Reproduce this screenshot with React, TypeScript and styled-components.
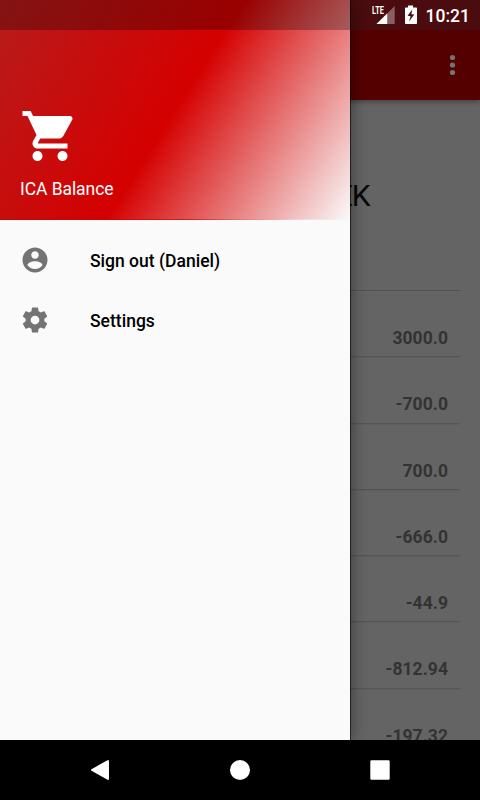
import React from "react";
import styled, { createGlobalStyle } from "styled-components";

const Global = createGlobalStyle`
  *, *::before, *::after { box-sizing: border-box; }
  body { margin: 0; font-family: Roboto, "Noto Sans", sans-serif; background: #000; }
`;

const Screen = styled.div`
  position: relative;
  width: 480px;
  height: 800px;
  display: flex;
  flex-direction: column;
  overflow: hidden;
  background: #000;
`;

const Content = styled.main`
  position: relative;
  height: 740px;
  display: flex;
  flex-direction: column;
  overflow: hidden;
  background: #646464;
`;

const AppBar = styled.header`
  flex: none;
  height: 100px;
  padding: 30px 17px 0 0;
  display: flex;
  align-items: center;
  justify-content: flex-end;
  background: linear-gradient(#4a0c0e 30px, #550000 30px);
  box-shadow: 0 2px 5px rgba(0, 0, 0, 0.35);
`;

const Balance = styled.div`
  flex: none;
  height: 190px;
  padding: 1px 110.3px 0 0;
  text-align: right;
  line-height: 190px;
  font-size: 30px;
  letter-spacing: -0.9px;
  color: #080808;
`;

const List = styled.ul`
  flex: none;
  margin: 0 20px;
  padding: 0;
  list-style: none;
`;

const Row = styled.li`
  height: 66.25px;
  padding: 36px 12px 0 0;
  border-top: 1px solid #515151;
  text-align: right;
  font-size: 17.5px;
  line-height: 22px;
  font-weight: 700;
  letter-spacing: 0.05px;
  color: #333;

  & + & {
    border-top-color: #555;
    box-shadow: inset 0 1px 0 #5f5f5f;
  }
`;

const Drawer = styled.aside`
  position: absolute;
  left: 0;
  top: 0;
  width: 350px;
  height: 740px;
  background: #fafafa;
  box-shadow: 1px 0 0 rgba(0, 0, 0, 0.55), 2px 0 14px rgba(0, 0, 0, 0.4);
`;

const DrawerHeader = styled.div`
  height: 220px;
  padding: 106px 20px 0 19.5px;
  display: flex;
  flex-direction: column;
  background:
    linear-gradient(90deg, #b80b0b, #d50000 33%, #d9201f 55%, #f4d4d4 85%, #fafafa) 0 219px / 100% 1px no-repeat,
    linear-gradient(122.15deg, #b71c1c, #d50000 50%, #fafafa);
`;

const AppName = styled.div`
  margin: 11px 0 0 0.5px;
  font-size: 17.5px;
  line-height: 24px;
  letter-spacing: -0.07px;
  color: #fff;
`;

const Menu = styled.nav`
  padding-top: 10px;
`;

const MenuItem = styled.div`
  height: 60px;
  padding-left: 20px;
  display: flex;
  align-items: center;
  gap: 40px;
  font-size: 17.5px;
  font-weight: 500;
  color: #000;
`;

const MenuLabel = styled.span`
  padding-top: 2px;
  letter-spacing: 0.01px;
`;

const StatusBar = styled.div`
  position: absolute;
  left: 0;
  top: 0;
  width: 480px;
  height: 30px;
  padding-right: 10px;
  display: flex;
  align-items: center;
  justify-content: flex-end;
  color: #fff;
`;

const StatusShade = styled.div`
  position: absolute;
  left: 0;
  top: 0;
  width: 350px;
  height: 30px;
  background: rgba(0, 0, 0, 0.28);
`;

const Network = styled.div`
  position: relative;
  width: 26px;
  height: 30px;
  margin-right: 6px;
`;

const NetworkLabel = styled.span`
  position: absolute;
  left: 0.5px;
  top: 5px;
  font-size: 10.5px;
  line-height: 11px;
  font-weight: 700;
  transform: scaleX(0.7);
  transform-origin: left;
`;

const Clock = styled.time`
  margin-left: 8px;
  font-size: 17.5px;
  line-height: 30px;
  font-weight: 500;
  padding-top: 2px;
`;

const NavBar = styled.footer`
  height: 60px;
  padding: 0 30px;
  display: flex;
  background: #000;
`;

const NavKey = styled.div`
  flex: 1;
  display: flex;
  align-items: center;
  justify-content: center;
`;

const amounts = ["3000.0", "-700.0", "700.0", "-666.0", "-44.9", "-812.94", "-197.32"];

const menu = [
  {
    label: "Sign out (Daniel)",
    path: "M12 2C6.48 2 2 6.48 2 12s4.48 10 10 10 10-4.48 10-10S17.52 2 12 2zm0 3c1.66 0 3 1.34 3 3s-1.34 3-3 3-3-1.34-3-3 1.34-3 3-3zm0 14.2c-2.5 0-4.71-1.28-6-3.22.03-1.99 4-3.08 6-3.08 1.99 0 5.97 1.09 6 3.08-1.29 1.94-3.5 3.22-6 3.22z",
  },
  {
    label: "Settings",
    path: "M19.43 12.98c.04-.32.07-.64.07-.98s-.03-.66-.07-.98l2.11-1.65c.19-.15.24-.42.12-.64l-2-3.46c-.12-.22-.39-.3-.61-.22l-2.49 1c-.52-.4-1.08-.73-1.69-.98l-.38-2.65C14.46 2.18 14.25 2 14 2h-4c-.25 0-.46.18-.49.42l-.38 2.65c-.61.25-1.17.59-1.69.98l-2.49-1c-.23-.09-.49 0-.61.22l-2 3.46c-.13.22-.07.49.12.64l2.11 1.65c-.04.32-.07.65-.07.98s.03.66.07.98l-2.11 1.65c-.19.15-.24.42-.12.64l2 3.46c.12.22.39.3.61.22l2.49-1c.52.4 1.08.73 1.69.98l.38 2.65c.03.24.24.42.49.42h4c.25 0 .46-.18.49-.42l.38-2.65c.61-.25 1.17-.59 1.69-.98l2.49 1c.23.09.49 0 .61-.22l2-3.46c.12-.22.07-.49-.12-.64l-2.11-1.65zM12 15.5c-1.93 0-3.5-1.57-3.5-3.5s1.57-3.5 3.5-3.5 3.5 1.57 3.5 3.5-1.57 3.5-3.5 3.5z",
  },
];

export default function App() {
  return (
    <>
      <Global />
      <Screen>
        <Content>
          <AppBar>
            <svg width="20" height="30" viewBox="0 0 20 30" fill="#747474">
              <circle cx="9.5" cy="7.5" r="2.6" />
              <circle cx="9.5" cy="15" r="2.6" />
              <circle cx="9.5" cy="22.5" r="2.6" />
            </svg>
          </AppBar>
          <Balance>-197.32 SEK</Balance>
          <List>
            {amounts.map((amount) => (
              <Row key={amount}>{amount}</Row>
            ))}
          </List>
          <Drawer>
            <DrawerHeader>
              <svg width="60" height="60" viewBox="0 0 24 24" fill="#fff">
                <path d="M7 18c-1.1 0-1.99.9-1.99 2S5.9 22 7 22s2-.9 2-2-.9-2-2-2zM1 2v2h2l3.6 7.59-1.35 2.45c-.16.28-.25.61-.25.96 0 1.1.9 2 2 2h12v-2H7.42c-.14 0-.25-.11-.25-.25l.03-.12.9-1.63h7.45c.75 0 1.41-.41 1.75-1.03l3.58-6.49c.08-.14.12-.31.12-.48 0-.55-.45-1-1-1H5.21l-.94-2H1zm16 16c-1.1 0-1.99.9-1.99 2s.89 2 1.99 2 2-.9 2-2-.9-2-2-2z" />
              </svg>
              <AppName>ICA Balance</AppName>
            </DrawerHeader>
            <Menu>
              {menu.map((item) => (
                <MenuItem key={item.label}>
                  <svg width="30" height="30" viewBox="0 0 24 24" fill="#737373">
                    <path d={item.path} />
                  </svg>
                  <MenuLabel>{item.label}</MenuLabel>
                </MenuItem>
              ))}
            </Menu>
          </Drawer>
          <StatusShade />
          <StatusBar>
            <Network>
              <NetworkLabel>LTE</NetworkLabel>
              <svg width="26" height="30" viewBox="0 0 26 30">
                <path d="M4.5 24 22.7 6v18z" fill="#fff" fillOpacity=".35" />
                <path d="M4.5 24 15.2 13.4V24z" fill="#fff" />
              </svg>
            </Network>
            <svg width="14" height="30" viewBox="0 0 14 30">
              <path d="M4 5.5h5v2h3.2q.8 0 .8.8V23q0 1-.8 1H1.8Q1 24 1 23V8.3q0-.8.8-.8H4z" fill="#fff" />
              <path d="M8.2 9.5 3.6 15.8 6.6 16.2 5 21.5 10.3 14.6 7.4 14.2z" fill="#4a0c0e" />
            </svg>
            <Clock>10:21</Clock>
          </StatusBar>
        </Content>
        <NavBar>
          <NavKey>
            <svg width="20" height="22" viewBox="0 0 20 22">
              <path d="M18 2v18L2 11z" fill="#fff" stroke="#fff" strokeWidth="2" strokeLinejoin="round" />
            </svg>
          </NavKey>
          <NavKey>
            <svg width="20" height="20" viewBox="0 0 20 20">
              <circle cx="10" cy="10" r="10" fill="#fff" />
            </svg>
          </NavKey>
          <NavKey>
            <svg width="20" height="20" viewBox="0 0 20 20">
              <rect x=".3" y=".3" width="19.4" height="19.4" rx="1.3" fill="#fff" />
            </svg>
          </NavKey>
        </NavBar>
      </Screen>
    </>
  );
}
